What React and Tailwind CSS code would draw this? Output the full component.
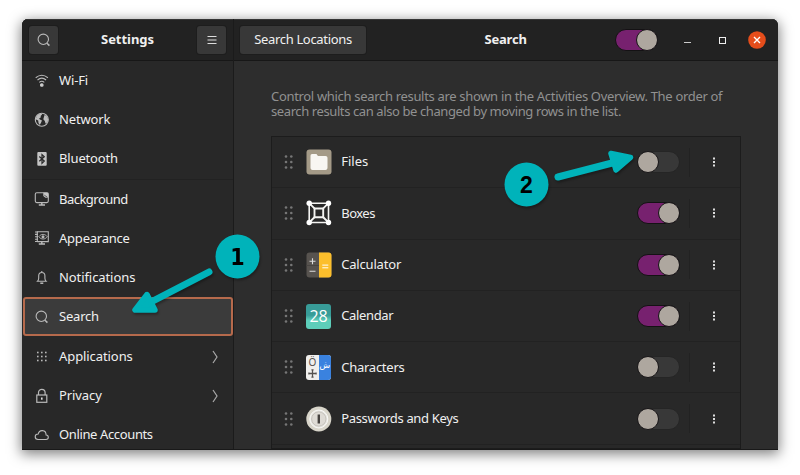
import React from 'react';

const stroke = { fill: 'none', stroke: '#b9b9b9', strokeWidth: 1.1 };

function SearchIcon() {
  return <svg viewBox="0 0 16 16" className="w-4 h-4"><g {...stroke}><circle cx="7.3" cy="7.3" r="5.2" /><path d="M11 11.200l2.400 2.400" strokeWidth="1.500" /></g></svg>;
}

const icons = {
  wifi: <svg viewBox="0 0 16 16" className="w-4 h-4"><g {...stroke}><path d="M1.700 4.700c3.800-3 8.400-3 12.200 0M3.500 7c2.600-2.200 6-2.200 8.600 0M5.300 9.300c1.500-1.300 3.500-1.300 5 0" /><circle cx="7.800" cy="12" r="1.300" fill="#ccc" stroke="#ccc" /></g></svg>,
  network: <svg viewBox="0 0 16 16" className="w-4 h-4"><circle cx="7.800" cy="7.800" r="6.500" {...stroke} strokeWidth="1.100" /><path d="M2 6l1.500-3L7 1.600l1.200 1-1.600 1.300.4 1.400-1.800 1 .6 1.200 2 .8-.3 1.500-1.700 3.200-1.300-2-.3-2.500L2 7.500zM10.500 3l2 .8 1.700 3.400-.6 2.800-2 1.700-.8-2.700-1.500-1.700.5-1.900z" fill="#bdbdbd" /></svg>,
  bluetooth: <svg viewBox="0 0 16 16" className="w-4 h-4"><rect x="3.300" y="1" width="9.400" height="13.800" rx="1" fill="#c4c4c4" /><path d="M5.300 5.500l5 4.600L8 12.400V3.600l2.300 2.200-5 4.500" fill="none" stroke="#292929" strokeWidth="1.200" /></svg>,
  background: <svg viewBox="0 0 16 16" className="w-4 h-4"><g {...stroke}><rect x="1.300" y="1.800" width="13" height="9.800" rx="1.500" /><path d="M7.800 12v2M4.800 14h6.200" strokeWidth="1.500" /></g><path d="M9.300 1.800h5v5H11.500L9.300 5z" fill="#c4c4c4" /><path d="M10.300 4.200l3 2" stroke="#292929" strokeWidth=".7" /></svg>,
  appearance: <svg viewBox="0 0 16 16" className="w-4 h-4"><g {...stroke}><path d="M3.300 11.600V1.800h11v9.800h-11" /><path d="M1 2h3M1 4.400h3M1 6.800h3M1 9.200h3M1 11.500h3" /><path d="M4.800 6.700c2.300-3.100 6.200-3.100 8.500 0-2.300 3.100-6.200 3.100-8.500 0z" strokeWidth=".9" /><path d="M7.800 12v2M4.800 14h6.200" strokeWidth="1.500" /></g><circle cx="9" cy="6.700" r="1.500" fill="#b9b9b9" /></svg>,
  bell: <svg viewBox="0 0 16 16" className="w-4 h-4"><g {...stroke}><path d="M3.400 11.300c1-1 1.300-1.600 1.300-3V5.800c0-4.400 6.200-4.400 6.200 0v2.500c0 1.400.3 2 1.300 3zM7.800 1v1.500" /><path d="M6.300 13.200h3" strokeWidth="1.500" /></g></svg>,
  search: <SearchIcon />,
  apps: <svg viewBox="0 0 16 16" className="w-4 h-4" fill="#b9b9b9">{[3, 7, 11].map(y => [3, 7, 11].map(x => <rect key={`${x}-${y}`} x={x} y={y - 0.3} width="1.600" height="1.600" />))}</svg>,
  lock: <svg viewBox="0 0 16 16" className="w-4 h-4"><g {...stroke} strokeWidth="1.200"><rect x="2.800" y="7" width="10" height="7.300" /><path d="M4.500 7V4.500c0-4.300 6.600-4.300 6.600 0V7" /></g><rect x="7" y="9.500" width="1.600" height="2.200" fill="#ddd" /></svg>,
  cloud: <svg viewBox="0 0 16 16" className="w-4 h-4"><path d="M4 12.500h8c3.100 0 3-4.400.1-4.500C12 2.300 5.200 2.300 4.200 7 .2 7.100.3 12.300 4 12.500z" {...stroke} /></svg>,
};

const appIcons = {
  files: <svg viewBox="0 0 26 26" className="w-[26px] h-[26px]"><rect x=".5" y=".5" width="25" height="25" rx="3" fill="#a49a87" /><path d="M4.500 7c0-1.200.5-2 1.600-2h4c1.200 0 1 2 2.400 2h7c1.300 0 2 .7 2 2v9.500c0 1.300-.7 2.500-2 2.500H6.500c-1.300 0-2-1.200-2-2.500V7z" fill="#f8f6f2" /></svg>,
  boxes: <svg viewBox="0 0 26 26" className="w-[26px] h-[26px]"><g fill="none" stroke="#f4f4f2"><path d="M3.200 3.200h19.300v19.300H3.200z" strokeWidth="1.600" /><path d="M8.500 8.500h8.700v8.700H8.500z" strokeWidth="1.900" /><path d="M3.200 3.200l5.500 5.500M22.500 3.200L17 8.700M3.200 22.500L8.700 17M22.500 22.500L17 17" strokeWidth="1.800" /></g><g fill="#fff">{[3.2, 22.5].map(x => [3.2, 22.5].map(y => <circle key={`${x}-${y}`} cx={x} cy={y} r="2.700" />))}</g></svg>,
  calculator: <svg viewBox="0 0 26 26" className="w-[26px] h-[26px]"><rect x=".5" y=".5" width="25" height="25" rx="3" fill="#57534f" /><path d="M13 .5h9.500a3 3 0 013 3v19a3 3 0 01-3 3H13z" fill="#fcbf2c" /><path d="M.5 13.500H13" stroke="#484542" /><path d="M3.500 9.300h6M6.500 6.300v6M3.500 19.300h6" stroke="#ddd" strokeWidth="1.100" /><path d="M16.300 13.100h6M16.300 15.800h6" stroke="#fff" strokeWidth="1" /></svg>,
  calendar: <div className="ml-[.5px] w-[25px] h-[25px] rounded-[3px] bg-linear-to-b from-[#389c98] from-45% to-[#5dceba] to-65% text-white text-[16px] leading-[25px] text-center font-['Open_Sans',sans-serif]">28</div>,
  characters: <div className="ml-[.5px] flex w-[25px] h-[25px] rounded-[3px] overflow-hidden bg-[#f0efed] text-[#55524f]"><div className="w-[12.500px] flex flex-col items-center text-[10px] leading-[14px] font-['Noto_Sans',sans-serif]"><span>Ö</span><svg viewBox="0 0 10 10" className="w-[9px] h-[9px]"><path d="M5 1v8M1 5h8M3.800 1h2.400M3.800 9h2.400M1 3.800v2.400M9 3.800v2.400" stroke="#55524f" strokeWidth="1.400" /></svg></div><div className="w-[12.500px] bg-[#3a82df] text-white text-[9px] leading-[21px] text-center font-['DejaVu_Sans',sans-serif]">ش</div></div>,
  keys: <svg viewBox="0 0 26 26" className="w-[26px] h-[26px]"><circle cx="12.800" cy="13" r="12.500" fill="#d8d5ca" /><circle cx="12.800" cy="13" r="9" fill="#eceae5" stroke="#f8f8f6" /><circle cx="12.800" cy="13" r="7.200" fill="#dedbd5" stroke="#bab7b1" strokeWidth=".8" /><path d="M12.800 8.500v9" stroke="#44413e" strokeWidth="2.400" /></svg>,
};

function Switch({ on }) {
  return (
    <div className={`flex h-[22px] w-[43px] shrink-0 rounded-full border ${on ? 'justify-end border-[#141214] bg-[#77216f]' : 'justify-start border-[#252525] bg-[#383838]'}`}>
      <div className="-m-px size-[22px] rounded-full border border-[#161416] bg-[#aea79f]" />
    </div>
  );
}

const navigation = [
  ['wifi', 'Wi-Fi', 'tracking-[-0.15px]'],
  ['network', 'Network', 'tracking-[-0.15px]'],
  ['bluetooth', 'Bluetooth', 'tracking-[-0.15px]'],
  ['background', 'Background', 'tracking-[-0.52px]'],
  ['appearance', 'Appearance', 'tracking-[-0.22px]'],
  ['bell', 'Notifications', 'tracking-[-0.08px]'],
  ['search', 'Search', 'tracking-[-0.2px]'],
  ['apps', 'Applications', 'tracking-[-0.08px]'],
  ['lock', 'Privacy', 'tracking-[-0.1px]'],
  ['cloud', 'Online Accounts', 'tracking-[-0.37px]'],
];

const apps = [
  ['files', 'Files', false, 'tracking-[0px]'],
  ['boxes', 'Boxes', true, 'tracking-[-0.5px]'],
  ['calculator', 'Calculator', true, 'tracking-[-0.18px]'],
  ['calendar', 'Calendar', true, 'tracking-[-0.35px]'],
  ['characters', 'Characters', false, 'tracking-[-0.25px]'],
  ['keys', 'Passwords and Keys', false, 'tracking-[-0.32px]'],
];

function NavItem({ icon, label, tracking }) {
  const selected = label === 'Search';
  return (
    <div className={`flex shrink-0 items-center ${label === 'Background' ? 'h-10 border-t border-[#222]' : selected ? 'mb-[.7px] ml-px h-[39px] rounded-[3px] border-2 border-[#b66a4c] bg-[#3b3b3b]' : 'h-[39.250px]'}`}>
      <div className={`flex w-4 ${selected ? 'ml-[9px]' : 'ml-3'}`}>{icons[icon]}</div>
      <span className={`ml-[9px] whitespace-nowrap ${tracking}`}>{label}</span>
      {(label === 'Applications' || label === 'Privacy') && <svg viewBox="0 0 8 14" className="mr-[14.500px] ml-auto h-[14px] w-2"><path d="M2 1l4 6-4 6" fill="none" stroke="#aaa" strokeWidth="1.200" /></svg>}
    </div>
  );
}

function AppRow({ icon, label, on, tracking }) {
  return (
    <div className="flex h-[51.300px] shrink-0 items-center border-b border-[#222]">
      <svg viewBox="0 0 9 14" className="ml-[12px] h-[14px] w-[9px]" fill="#767676">{[1.5, 7, 12.5].map(y => [2, 7.3].map(x => <circle key={`${x}-${y}`} cx={x} cy={y} r="1.300" />))}</svg>
      <div className="ml-[12.600px] flex w-[26px]">{appIcons[icon]}</div>
      <span className={`ml-[9.600px] whitespace-nowrap ${tracking}`}>{label}</span>
      <div className="ml-auto"><Switch on={on} /></div>
      <div className="ml-[9px] h-[29px] w-px bg-[#222]" />
      <svg viewBox="0 0 4 10" className="mr-[24px] ml-[22.500px] h-[10px] w-1" fill="#ddd"><path d="M1 .5h2v2H1zM1 4h2v2H1zM1 7.500h2v2H1z" /></svg>
    </div>
  );
}

export default function App() {
  return (
    <div className="relative h-[475px] w-[800px] overflow-hidden bg-white px-[22px] pt-[19px] font-['Noto_Sans',sans-serif] text-[13px] text-[#f0f0f0]">
      <div className="flex h-[431px] w-[756px] overflow-hidden rounded-t-[6px] border-b border-[#191919] bg-[#2d2d2d] shadow-[0_3px_13px_1px_rgba(0,0,0,0.5)]">
        <aside className="flex w-[212px] shrink-0 flex-col border-r border-[#1b1b1b] bg-[#282828]">
          <header className="flex h-[42px] shrink-0 items-center border-t border-b border-t-[#353535] border-b-[#171717] bg-[#222] px-[7px]">
            <button className="flex h-[28px] w-[29px] items-center justify-center rounded-[3px] bg-[#383838] shadow-[0_0_0_1px_#1d1d1d]"><SearchIcon /></button>
            <b className="flex-1 text-center tracking-[-0.05px]">Settings</b>
            <button className="flex h-[28px] w-[29px] items-center justify-center rounded-[3px] bg-[#383838] shadow-[0_0_0_1px_#1d1d1d]"><svg viewBox="0 0 10 10" className="size-[10px]"><path d="M.5 1.500h9M.5 5h9M.5 8.500h9" stroke="#ddd" /></svg></button>
          </header>
          {navigation.map(([icon, label, tracking]) => <NavItem key={label} icon={icon} label={label} tracking={tracking} />)}
        </aside>
        <main className="flex min-w-0 flex-1 flex-col">
          <header className="flex h-[42px] shrink-0 items-center border-t border-b border-t-[#353535] border-b-[#171717] bg-[#222] pl-[6px]">
            <button className="h-[28px] w-[126px] rounded-[3px] bg-[#383838] text-center tracking-[-0.33px] shadow-[0_0_0_1px_#1d1d1d]">Search Locations</button>
            <b className="ml-[118.500px] w-[42.500px] whitespace-nowrap tracking-[-0.2px]">Search</b>
            <div className="ml-[88px]"><Switch on /></div>
            <div className="ml-[26px] mt-1 h-px w-[7px] bg-[#ccc]" />
            <div className="ml-[28px] size-[7px] border border-[#eee]" />
            <svg viewBox="0 0 18 18" className="ml-[22px] size-[18px]"><circle cx="9" cy="9" r="8.800" fill="#e54d1b" /><path d="M6 6l6 6M12 6l-6 6" stroke="#fff" strokeWidth="1.400" /></svg>
          </header>
          <p className="mt-[28px] ml-[37px] whitespace-nowrap leading-[15px] text-[#919191]">
            <span className="tracking-[-0.32px]">Control which search results are shown in the Activities Overview. The order of</span><br />
            <span className="tracking-[-0.4px]">search results can also be changed by moving rows in the list.</span>
          </p>
          <section className="mt-[17px] ml-[37px] h-[350px] w-[470px] border border-[#1c1c1c] bg-[#282828]">
            {apps.map(([icon, label, on, tracking]) => <AppRow key={label} icon={icon} label={label} on={on} tracking={tracking} />)}
          </section>
        </main>
      </div>
      <svg viewBox="0 0 800 475" className="absolute inset-0 h-[475px] w-[800px] drop-shadow-[1px_2px_1px_rgba(0,0,0,0.3)]">
        <g fill="#00b3ba" stroke="#00b3ba" strokeLinecap="round" strokeLinejoin="round">
          <circle cx="237.500" cy="256.500" r="22" stroke="none" /><circle cx="526.500" cy="184.500" r="22" stroke="none" />
          <path d="M209 272L150 302.500M558 177L616 162" strokeWidth="7" />
          <path d="M147 294.500L135 310L155 310zM611 153.500L630.500 157.500L616 170z" strokeWidth="5.500" />
        </g>
      </svg>
      <b className="absolute top-[244px] left-[226px] w-[23px] scale-x-90 text-center text-[23px] leading-[27px] font-['DejaVu_Sans',sans-serif] text-black">1</b>
      <b className="absolute top-[172px] left-[515px] w-[23px] text-center text-[23px] leading-[27px] font-['Liberation_Sans',sans-serif] text-black">2</b>
    </div>
  );
}
